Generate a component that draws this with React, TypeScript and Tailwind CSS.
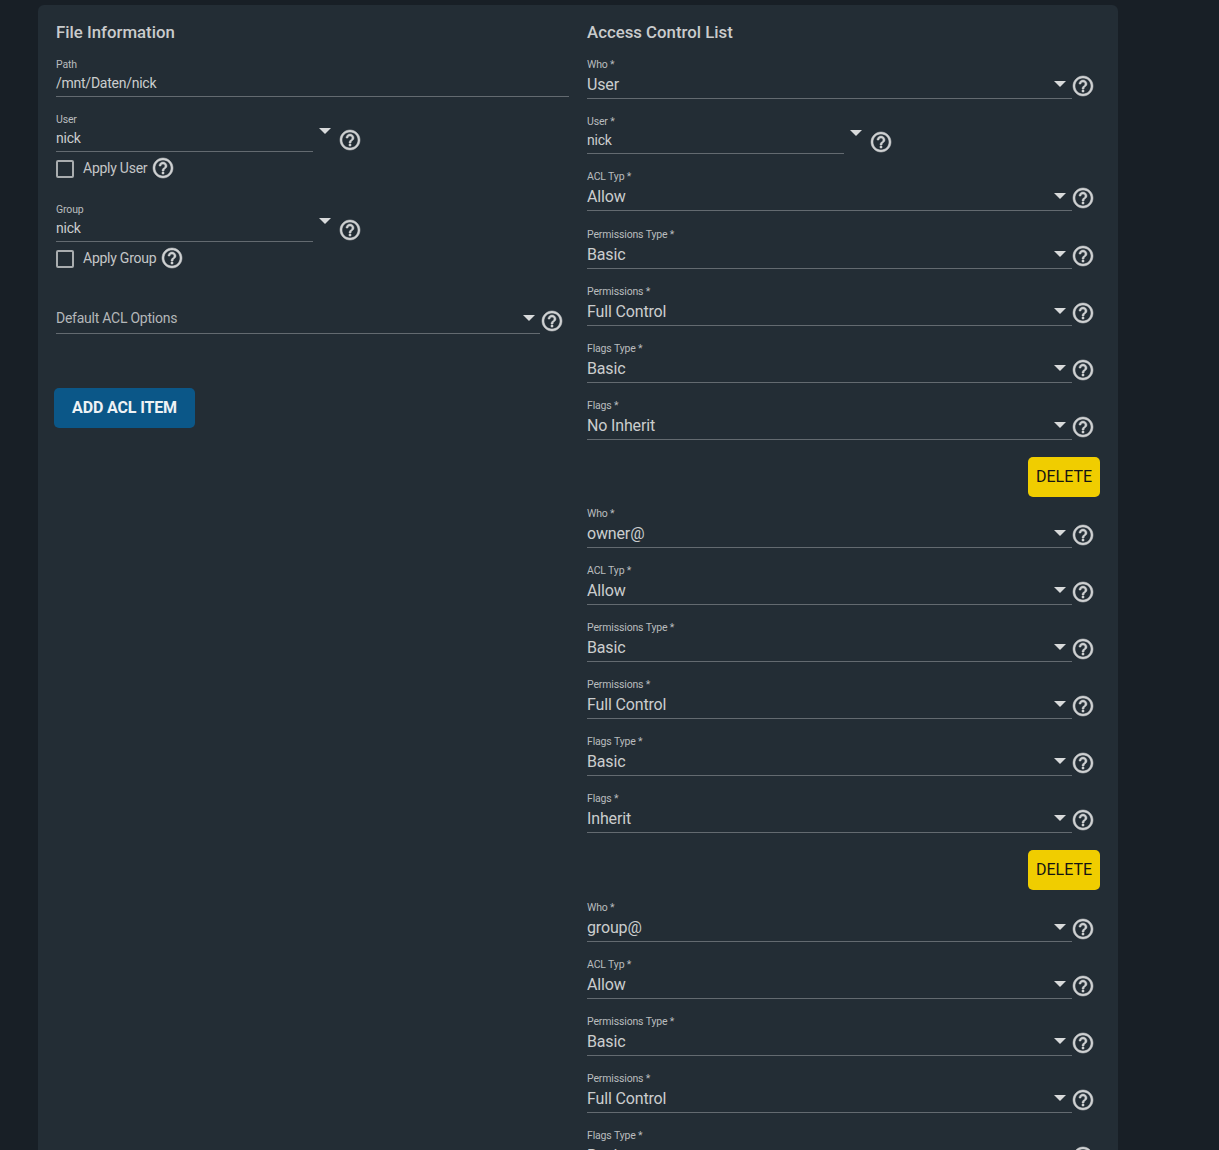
const HELP_PATH =
  'M11 18h2v-2h-2v2zm1-16C6.48 2 2 6.48 2 12s4.48 10 10 10 10-4.48 10-10S17.52 2 12 2zm0 18c-4.41 0-8-3.59-8-8s3.59-8 8-8 8 3.59 8 8-3.59 8-8 8zm0-14c-2.21 0-4 1.79-4 4h2c0-1.1.9-2 2-2s2 .9 2 2c0 2-3 1.75-3 5h2c0-2.25 3-2.5 3-5 0-2.21-1.79-4-4-4z'

function Help() {
  return (
    <svg viewBox="0 0 24 24" className="w-6 h-6 shrink-0 fill-[#cfd1d2] stroke-[#cfd1d2] stroke-[0.5]">
      <path d={HELP_PATH} />
    </svg>
  )
}

function Arrow() {
  return <span className="w-0 h-0 border-x-[6.5px] border-x-transparent border-t-[6px] border-t-[#d8dadb]" />
}

interface FieldProps {
  label: string
  value: string
  height?: string
}

// full width select of the acl list
function AclField({ label, value, height = 'h-[57px]' }: FieldProps) {
  return (
    <div className={`flex ${height}`}>
      <div className="flex-1">
        <div className="relative h-[43px] border-b border-[#636a70]">
          <div className="text-[10.5px] leading-[14px] tracking-[-0.15px] text-[#b9bcbe] pt-0.5">{label}</div>
          <div className="text-base leading-5 tracking-[-0.15px] text-[#cbcdce] mt-[3px]">{value}</div>
          <div className="absolute right-1.5 top-[25px] flex">
            <Arrow />
          </div>
        </div>
      </div>
      <div className="-ml-px mt-[18px] mr-[5px]">
        <Help />
      </div>
    </div>
  )
}

// shorter select with the arrow outside of the underline
function ShortField({ label, value }: { label: string; value: string }) {
  return (
    <div className="flex w-[313px]">
      <div className="w-[257px] h-[41px] border-b border-[#636a70] shrink-0">
        <div className="text-[10.5px] leading-[14px] tracking-[-0.15px] text-[#b9bcbe] pt-0.5">{label}</div>
        <div className="text-sm leading-5 tracking-[-0.25px] text-[#cbcdce] mt-[1px]">{value}</div>
      </div>
      <div className="ml-1.5 mt-[17px] flex h-2">
        <Arrow />
      </div>
      <div className="ml-[7px] mt-[17px]">
        <Help />
      </div>
    </div>
  )
}

function Check({ label }: { label: string }) {
  return (
    <div className="flex items-center h-6 mt-1 text-sm tracking-[-0.25px] text-[#c3c6c7]">
      <span className="w-[18px] h-[18px] mt-px border-2 border-[#a9adaf] rounded-[2px]" />
      <span className="ml-[9px]">{label}</span>
      <span className="ml-1">
        <Help />
      </span>
    </div>
  )
}

function AclBlock({ who, flags }: { who: string; flags: string }) {
  const first = who === 'User'
  return (
    <div>
      <AclField label="Who *" value={who} />
      {first && (
        <div className="h-[55px]">
          <ShortField label="User *" value="nick" />
        </div>
      )}
      <AclField label="ACL Typ *" value="Allow" height={first ? 'h-[58px]' : 'h-[57px]'} />
      <AclField label="Permissions Type *" value="Basic" />
      <AclField label="Permissions *" value="Full Control" />
      <AclField label="Flags Type *" value="Basic" />
      <AclField label="Flags *" value={flags} />
      <div className={`flex justify-end mt-[3px] ${first ? 'mb-2' : 'mb-[9px]'}`}>
        <button className="w-[72px] h-10 rounded-[5px] bg-[#f0cd00] text-base text-[#141414]">
          DELETE
        </button>
      </div>
    </div>
  )
}

export default function App() {
  return (
    <div className="h-[1150px] overflow-hidden bg-[#181f26] pt-[5px] pl-[38px] font-['Roboto',sans-serif]">
      <div className="w-[1080px] rounded-t-md bg-[#232d35] px-[18px] pt-4 pb-10">
        <div className="grid grid-cols-2 gap-x-[18px]">
          <div>
            <h2 className="pb-px text-[16.8px] leading-[22px] font-medium text-[#c9cbcc]">File Information</h2>
            <div className="mt-2.5 h-[42px] border-b border-[#636a70] box-content">
              <div className="text-[10.5px] leading-[14px] tracking-[-0.15px] text-[#b9bcbe] pt-1">Path</div>
              <div className="text-sm leading-5 tracking-[-0.25px] text-[#cbcdce] mt-px">/mnt/Daten/nick</div>
            </div>
            <div className="mt-[14px]">
              <ShortField label="User" value="nick" />
            </div>
            <Check label="Apply User" />
            <div className="mt-[21px]">
              <ShortField label="Group" value="nick" />
            </div>
            <Check label="Apply Group" />
            <div className="flex mt-[33px] w-[508px]">
              <div className="relative flex-1 h-[31px] border-b border-[#636a70] text-sm leading-5 tracking-[-0.25px] text-[#b4b7b9] pt-[5px]">
                Default ACL Options
                <div className="absolute right-[5px] top-[12px] flex">
                  <Arrow />
                </div>
              </div>
              <div className="mt-1.5">
                <Help />
              </div>
            </div>
            <button className="mt-[54px] -ml-0.5 w-[141px] h-10 rounded-[5px] bg-[#0b5788] text-base tracking-[-0.15px] font-bold text-[#eef2f5]">
              ADD ACL ITEM
            </button>
          </div>
          <div>
            <h2 className="pb-px text-[16.8px] leading-[22px] font-medium text-[#c9cbcc]">Access Control List</h2>
            <div className="pt-3">
              <AclBlock who="User" flags="No Inherit" />
              <AclBlock who="owner@" flags="Inherit" />
              <AclBlock who="group@" flags="Inherit" />
            </div>
          </div>
        </div>
      </div>
    </div>
  )
}
